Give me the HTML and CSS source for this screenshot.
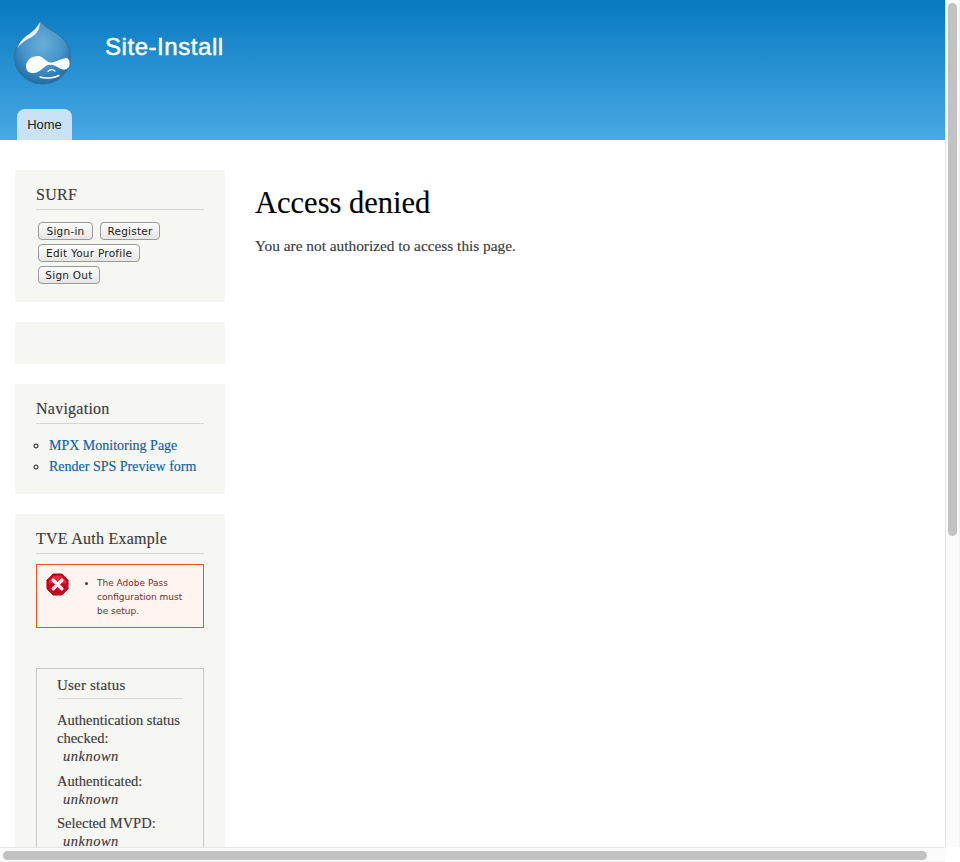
FILE: index.html
```html
<!DOCTYPE html>
<html lang="en">
<head>
<meta charset="utf-8">
<title>Access denied | Site-Install</title>
<link rel="stylesheet" href="styles.css">
</head>
<body>
<div class="window">
  <div class="page">
    <header class="header">
      <div class="brand">
        <svg class="logo" width="60" height="68" viewBox="0 0 60 68" aria-hidden="true">
          <defs>
            <radialGradient id="drop" cx="0.5" cy="0.38" r="0.62">
              <stop offset="0" stop-color="#6aaedb"/>
              <stop offset="0.6" stop-color="#4593c8"/>
              <stop offset="1" stop-color="#1f6ea6"/>
            </radialGradient>
          </defs>
          <path d="M26.500 1.500C27.500 6 31 8.500 36 11.500C47 17 56.500 26 56.500 38.500C56.500 54 44.500 66 28.500 66C13 66 0.500 54 0.500 39C0.500 27 9 19 16.500 14.500C21 11.500 25.500 7 26.500 1.500Z" fill="url(#drop)" stroke="#2f7099" stroke-width="0.800"/>
          <path d="M25.500 4C24 9 19 13.500 13 17.500C8 21 5 25 3.500 30C7.500 24.500 13 21.500 18.500 18.500C23 15.500 26.500 10.500 25.500 4Z" fill="#eaf4fb"/>
          <path d="M12 48C12 42 18 38 24 38C29 38 32 44 36 44.500C40 45 47 41 52 40C55 40 56 44 55.500 47C55 51 50 53 46 50.500C42 48 38 46 34 47C30 48 27 54 20 55C15 55.500 12 53 12 48Z" fill="#fff"/>
          <path d="M26 59C32 61 40 60 45 57.500" fill="none" stroke="#fff" stroke-width="1.400" stroke-linecap="round"/>
          <path d="M34 53.500C36 51 39 51 41 53" fill="none" stroke="#fff" stroke-width="1.200" stroke-linecap="round"/>
        </svg>
        <div class="site-name">Site-Install</div>
      </div>
      <nav class="tabs"><a class="tab" href="#">Home</a></nav>
    </header>
    <div class="layout">
      <aside class="sidebar">
        <section class="block">
          <h2 class="block-title">SURF</h2>
          <div class="buttons">
            <div class="button-row"><button class="btn btn-signin">Sign-in</button><button class="btn btn-register">Register</button></div>
            <div class="button-row"><button class="btn">Edit Your Profile</button></div>
            <div class="button-row"><button class="btn btn-signout">Sign Out</button></div>
          </div>
        </section>
        <section class="block block-empty"></section>
        <section class="block">
          <h2 class="block-title">Navigation</h2>
          <ul class="menu">
            <li><a href="#">MPX Monitoring Page</a></li>
            <li><a href="#">Render SPS Preview form</a></li>
          </ul>
        </section>
        <section class="block">
          <h2 class="block-title">TVE Auth Example</h2>
          <div class="error">
            <svg class="error-icon" width="23" height="23" viewBox="0 0 24 24" aria-hidden="true">
              <path d="M7.500 1H16.500L23 7.500V16.500L16.500 23H7.500L1 16.500V7.500Z" fill="#d0021b" stroke="#a30f1a" stroke-width="1" stroke-linejoin="round"/>
              <path d="M3 8L8 3H16L21 8V11H3Z" fill="#e8555f" opacity="0.5"/>
              <path d="M7.500 7.500L16.500 16.500M16.500 7.500L7.500 16.500" stroke="#f4f1f1" stroke-width="3.600" stroke-linecap="round"/>
            </svg>
            <ul class="error-list"><li>The Adobe Pass configuration must be setup.</li></ul>
          </div>
          <div class="inner-box">
            <h3 class="inner-title">User status</h3>
            <div class="status">Authentication status checked:<br><em>unknown</em></div>
            <div class="status">Authenticated:<br><em>unknown</em></div>
            <div class="status">Selected MVPD:<br><em>unknown</em></div>
          </div>
        </section>
      </aside>
      <main class="content">
        <h1 class="page-title">Access denied</h1>
        <p class="message">You are not authorized to access this page.</p>
      </main>
    </div>
  </div>
  <div class="scroll-v"><div class="thumb-v"></div></div>
  <div class="scroll-h"><div class="thumb-h"></div></div>
  <div class="scroll-corner"></div>
</div>
</body>
</html>
```
FILE: styles.css
```css
html, body { margin: 0; height: 100%; overflow: hidden; }
body { font-family: "Liberation Serif", serif; color: #3b3b3b; background: #fff; -webkit-text-stroke: 0.15px; }

.window { width: 960px; height: 862px; display: grid; grid-template-columns: 945px 15px; grid-template-rows: 847px 15px; }

.page { overflow: hidden; background: #fff; }

.scroll-v { box-sizing: border-box; background: #fbfbfb; border-left: 1px solid #e6e6e6; border-right: 1px solid #f1f1f1; padding: 3px 2px 0 2px; }
.thumb-v { width: 9px; height: 533px; background: #c2c2c2; border-radius: 5px; }
.scroll-h { box-sizing: border-box; background: #fbfbfb; border-top: 1px solid #e6e6e6; border-bottom: 1px solid #f1f1f1; padding: 3px 0 0 3px; }
.thumb-h { width: 924px; height: 9px; background: #c2c2c2; border-radius: 5px; }
.scroll-corner { background: #fff; }

.header { width: 945px; height: 140px; background: linear-gradient(#0779bf, #48a9e4); display: flex; flex-direction: column; justify-content: space-between; }
.brand { display: flex; align-items: flex-start; padding: 18px 0 0 14px; }
.logo { flex: none; display: block; }
.site-name { font-family: "Liberation Sans", sans-serif; font-size: 24px; line-height: 28px; letter-spacing: 0.55px; -webkit-text-stroke: 0.5px #fff; color: #fff; margin: 15px 0 0 31px; }
.tabs { display: flex; padding-left: 17px; }
.tab { width: 55px; height: 31px; line-height: 31px; text-align: center; background: #c9e2f5; border-radius: 8px 8px 0 0; font-family: "Liberation Sans", sans-serif; font-size: 13px; color: #222; text-decoration: none; -webkit-text-stroke: 0; }

.layout { display: flex; padding: 30px 0 0 15px; }
.sidebar { width: 210px; flex: none; }
.block { background: #f6f6f2; padding: 15px 21px 18px; margin-bottom: 20px; }
.block-empty { height: 42px; padding: 0; box-sizing: border-box; }
.block-title { font-size: 16px; font-weight: normal; line-height: 20px; color: #3b3b3b; margin: 0 0 12px; padding-bottom: 4px; border-bottom: 1px solid #d6d6d6; letter-spacing: 0.25px; }

.buttons { display: flex; flex-direction: column; gap: 4px; padding-left: 2px; }
.button-row { display: flex; gap: 7px; }
.btn { height: 18px; padding: 0 7px; border: 1px solid #9a9a9a; border-radius: 4px; background: linear-gradient(#fefefe, #e6e6e6); font-family: "DejaVu Sans", sans-serif; font-size: 10.500px; line-height: 16px; letter-spacing: 0.25px; color: #222; white-space: nowrap; -webkit-text-stroke: 0; }
.btn-signin { width: 55px; padding: 0; }
.btn-register { width: 60px; padding: 0; }
.btn-signout { width: 62px; padding: 0; }

.menu { margin: -1px 0 -1px; padding: 0 0 0 13px; list-style: circle; font-size: 14px; line-height: 21px; }
.menu a { color: #0a62a8; text-decoration: none; }
.menu li::marker { color: #111; }

.error { display: flex; box-sizing: border-box; height: 64px; margin: -2px 0 40px; border: 1px solid #ed541d; background: #fef5f1; }
.error-icon { flex: none; margin: 8px 0 0 9px; }
.error-list { margin: 0; padding: 11px 10px 0 28px; font-family: "DejaVu Sans", sans-serif; font-size: 9px; line-height: 14px; color: #7c2a26; -webkit-text-stroke: 0; }

.inner-box { border: 1px solid #c9c9c9; padding: 6px 20px 10px; }
.inner-title { font-size: 15px; font-weight: normal; line-height: 20px; margin: 0 0 12px; padding-bottom: 3px; border-bottom: 1px solid #d6d6d6; color: #3b3b3b; letter-spacing: 0.2px; }
.status { font-size: 14.500px; line-height: 18px; margin-bottom: 6.500px; }
.status em { margin-left: 6px; letter-spacing: 0.5px; }

.content { padding-left: 30px; }
.page-title { font-size: 30.500px; font-weight: normal; line-height: 40px; color: #000; margin: 13px 0 0; }
.message { font-size: 15.350px; line-height: 21px; margin: 12px 0 0; }
```
